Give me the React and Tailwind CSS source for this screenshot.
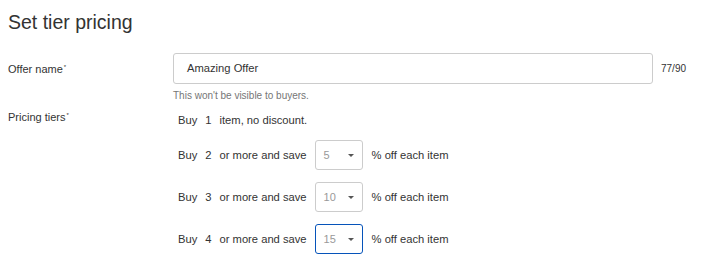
import React from "react";

const tiers = [
  { qty: 2, pct: 5 },
  { qty: 3, pct: 10 },
  { qty: 4, pct: 15, focused: true },
];

function PctSelect({ value, focused }) {
  return (
    <div
      className={`flex h-[30px] w-[48px] items-center justify-between rounded-[3px] border bg-white pl-[8px] pr-[8px] ${
        focused ? "border-[#0654ba]" : "border-[#cccccc]"
      }`}
    >
      <span className="text-[11px] leading-none text-[#999]">{value}</span>
      <svg width="6" height="3" viewBox="0 0 6 3">
        <path d="M0 0h6L3 3z" fill="#555" />
      </svg>
    </div>
  );
}

function Label({ children, className = "" }) {
  return (
    <div className={`w-[165px] shrink-0 text-[11px] leading-[16px] text-[#333] ${className}`}>
      {children}
      <sup className="relative -top-[4px] ml-[1px] text-[6px]">*</sup>
    </div>
  );
}

export default function App() {
  return (
    <div className="h-[266px] w-[702px] bg-white px-2 pt-2 font-['Liberation_Sans',Arial,sans-serif] text-[#333]">
      <h1 className="text-[19.5px] leading-[28px] font-normal text-[#333]">Set tier pricing</h1>

      {/* offer name */}
      <div className="mt-[17px] flex items-center">
        <Label>Offer name</Label>
        <div className="flex h-[31px] w-[480px] items-center rounded-[3px] border border-[#cccccc] bg-white pl-[13px] text-[11.2px] text-[#333]">
          Amazing Offer
        </div>
        <span className="ml-[8px] text-[10px] text-[#333]">77/90</span>
      </div>
      <p className="mt-1 pl-[165px] text-[10px] leading-[15px] text-[#767676]">
        This won't be visible to buyers.
      </p>

      {/* pricing tiers */}
      <div className="mt-[6px] flex">
        <Label>Pricing tiers</Label>
        <div className="flex flex-col gap-[12px] pl-[5px] pt-[3px] text-[11.2px] text-[#333]">
          <div className="flex h-[16px] items-center">
            <span>Buy</span>
            <span className="px-[8px]">1</span>
            <span>item, no discount.</span>
          </div>
          {tiers.map((t) => (
            <div key={t.qty} className="flex h-[30px] items-center">
              <span>Buy</span>
              <span className="px-[8px]">{t.qty}</span>
              <span>or more and save</span>
              <div className="ml-[8px] mr-[9px]">
                <PctSelect value={t.pct} focused={t.focused} />
              </div>
              <span>% off each item</span>
            </div>
          ))}
        </div>
      </div>
    </div>
  );
}
